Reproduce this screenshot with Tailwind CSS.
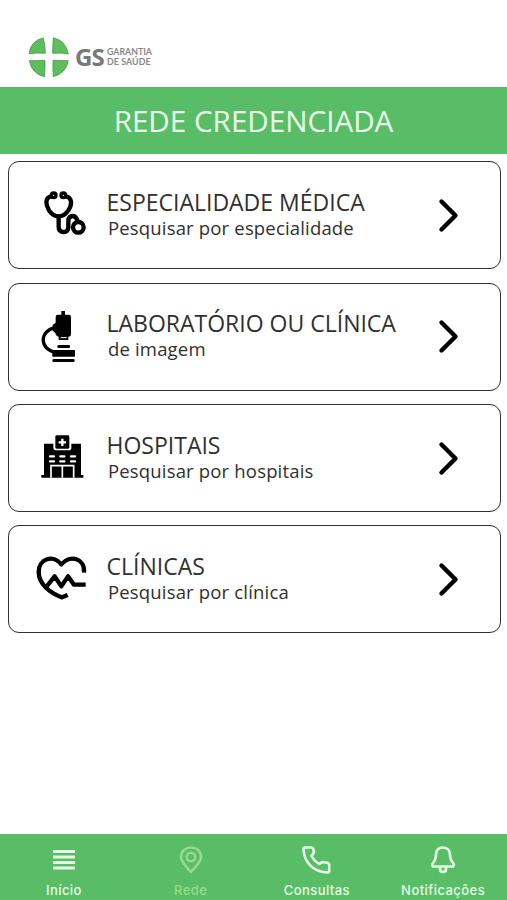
<!DOCTYPE html>
<html lang="pt-BR">
<head>
    <meta charset="UTF-8">
    <meta name="viewport" content="width=device-width, initial-scale=1.0">
    <title>Rede Credenciada</title>
    <script src="https://cdn.jsdelivr.net/npm/@tailwindcss/browser@4"></script>
</head>
<body class="h-[900px] bg-white flex flex-col overflow-hidden font-['Open_Sans',sans-serif] text-[#303030]">
    <!-- Logo -->
    <header class="h-[87px] shrink-0 flex items-start pl-7 pt-9">
        <svg class="w-[42px] h-[42px]" viewBox="0 0 126 126" fill="#5ebd5c" stroke="#348f43" stroke-width="2" stroke-linejoin="round">
            <path d="M46 6 Q52 28 52 52 Q26 50 3 53 Q8 14 46 6Z"/>
            <path d="M76 5 Q114 14 121 54 Q98 50 74 52 Q74 28 76 5Z"/>
            <path d="M4 74 Q28 74 51 73 Q52 98 49 122 Q10 112 4 74Z"/>
            <path d="M121 74 Q98 74 75 73 Q74 98 76 122 Q114 112 121 74Z"/>
        </svg>
        <div class="flex items-center h-[42px] ml-[5px] text-[#77797b]">
            <span class="text-[24px] font-bold leading-none tracking-[-0.8px] font-['Noto_Sans',sans-serif]">GS</span>
            <div class="ml-[3px] text-[8.8px] leading-[10px] font-['Lato',sans-serif] font-bold text-[#85878a]">
                <p>GARANTIA</p>
                <p class="tracking-[0.1px]">DE SAÚDE</p>
            </div>
        </div>
    </header>

    <h1 class="h-[67px] shrink-0 bg-[#59bd68] text-[#e9ffe9] text-[29.6px] leading-[68px] text-center">REDE CREDENCIADA</h1>

    <!-- Options -->
    <main class="flex-1 pl-[7.5px] pr-[6.5px] pt-[7.3px] flex flex-col gap-[13.3px]">
        <a class="h-[108px] shrink-0 flex rounded-[11px] border-[1.5px] border-[#303030]">
            <svg class="w-[70px] h-[65px] ml-[21px] mt-[18px] shrink-0" viewBox="0 0 210 195" fill="none" stroke="#000" stroke-width="13" stroke-linecap="round" stroke-linejoin="round">
                <circle cx="71" cy="46" r="7" stroke-width="10"/>
                <circle cx="100" cy="46" r="7" stroke-width="10"/>
                <path d="M63 49 C44 54 47 75 57 91 Q69 109 86 109 Q103 109 115 91 C126 75 128 54 108 49"/>
                <path d="M86 110 V141 Q86 156 101 156 Q115 156 115 141 V122 Q116 108 129 108 Q137 108 142 121"/>
                <circle cx="145" cy="142" r="16"/>
            </svg>
            <div class="ml-[7px] pt-[24px] flex-1">
                <h2 class="text-[23px] leading-8">ESPECIALIDADE MÉDICA</h2>
                <p class="ml-[1.5px] -mt-1 text-[18.5px] leading-7 tracking-[0.17px]">Pesquisar por especialidade</p>
            </div>
            <svg class="w-6 h-10 mr-[40px] mt-[33px] shrink-0" viewBox="0 0 24 40" fill="none" stroke="#000" stroke-width="4.4" stroke-linecap="round" stroke-linejoin="round"><path d="M5.500 6.500 L19.500 20.500 L5.500 34.500"/></svg>
        </a>

        <a class="h-[108px] shrink-0 flex rounded-[11px] border-[1.5px] border-[#303030]">
            <svg class="w-[70px] h-[70px] ml-[21px] mt-[16px] shrink-0" viewBox="0 0 210 210" fill="#000">
                <path d="M94 33 H105 V44 H116 Q123 44 123 51 V102 Q123 110 115 110 V120 H86 V110 Q78 109 76 99 L68 92 V75 L77 68 V51 Q77 44 84 44 H94Z"/>
                <path d="M76 82 C27 93 28 148 76 157" fill="none" stroke="#000" stroke-width="10"/>
                <path d="M92 113 H110" stroke="#fff" stroke-width="3"/>
                <rect x="82" y="135" width="38" height="9" rx="4"/>
                <rect x="67" y="150" width="68" height="20" rx="2"/>
                <rect x="67" y="177" width="67" height="9" rx="4"/>
            </svg>
            <div class="ml-[7px] pt-[23.5px] flex-1">
                <h2 class="text-[23px] leading-8">LABORATÓRIO OU CLÍNICA</h2>
                <p class="ml-[1.5px] -mt-1 text-[18.5px] leading-7 tracking-[0.17px]">de imagem</p>
            </div>
            <svg class="w-6 h-10 mr-[40px] mt-[32px] shrink-0" viewBox="0 0 24 40" fill="none" stroke="#000" stroke-width="4.4" stroke-linecap="round" stroke-linejoin="round"><path d="M5.500 6.500 L19.500 20.500 L5.500 34.500"/></svg>
        </a>

        <a class="h-[108px] shrink-0 flex rounded-[11px] border-[1.5px] border-[#303030]">
            <svg class="w-[70px] h-[65px] ml-[21px] mt-[20px] shrink-0" viewBox="0 0 210 195" fill="#000">
                <path d="M34 150 H42 V56 H70 V68 Q70 76 80 76 H116 Q124 76 124 68 V56 H153 V150 H160 V158 H34Z"/>
                <rect x="76" y="31" width="42" height="40" rx="4"/>
                <path d="M97 41 V63 M86 52 H108" stroke="#fff" stroke-width="7"/>
                <path d="M60 94 H72 M91 94 H103 M123 94 H135 M60 109 H72 M91 109 H103 M123 109 H135" stroke="#fff" stroke-width="7" stroke-linecap="round"/>
                <path d="M63 158 V122 H131 V158 M97 122 V158" fill="none" stroke="#fff" stroke-width="5"/>
            </svg>
            <div class="ml-[7px] pt-[24px] flex-1">
                <h2 class="text-[23px] leading-8">HOSPITAIS</h2>
                <p class="ml-[1.5px] -mt-1 text-[18.5px] leading-7 tracking-[0.17px]">Pesquisar por hospitais</p>
            </div>
            <svg class="w-6 h-10 mr-[40px] mt-[33px] shrink-0" viewBox="0 0 24 40" fill="none" stroke="#000" stroke-width="4.4" stroke-linecap="round" stroke-linejoin="round"><path d="M5.500 6.500 L19.500 20.500 L5.500 34.500"/></svg>
        </a>

        <a class="h-[108px] shrink-0 flex rounded-[11px] border-[1.5px] border-[#303030]">
            <svg class="w-[75px] h-[65px] ml-[16px] mt-[18px] shrink-0" viewBox="0 0 225 195" fill="none" stroke="#000" stroke-width="13" stroke-linejoin="round">
                <path d="M177 86 C181 42 135 31 109 61 C85 31 41 43 41 84 C41 119 75 148 111 160 L128 153"/>
                <path d="M66 126 L89 97 L109 127 L129 97 L147 122 H182"/>
            </svg>
            <div class="ml-[7px] pt-[24px] flex-1">
                <h2 class="text-[23px] leading-8">CLÍNICAS</h2>
                <p class="ml-[1.5px] -mt-1 text-[18.5px] leading-7 tracking-[0.17px]">Pesquisar por clínica</p>
            </div>
            <svg class="w-6 h-10 mr-[40px] mt-[33px] shrink-0" viewBox="0 0 24 40" fill="none" stroke="#000" stroke-width="4.4" stroke-linecap="round" stroke-linejoin="round"><path d="M5.500 6.500 L19.500 20.500 L5.500 34.500"/></svg>
        </a>
    </main>

    <!-- Tab bar -->
    <nav class="h-[66px] shrink-0 grid grid-cols-4 bg-[#59bd68] text-[#e4ffe2] font-['Inter',sans-serif] text-[13px] font-medium tracking-[0.45px]">
        <a class="flex flex-col items-center pt-[11px]">
            <svg class="w-[30px] h-[30px] ml-[2px]" viewBox="0 0 30 30" stroke="currentColor" stroke-width="3"><path d="M4 6.500 H26 M4 12 H26 M4 17.500 H26 M4 23 H26"/></svg>
            <span class="mt-[5px] ml-px leading-5">Início</span>
        </a>
        <a class="flex flex-col items-center pt-[11px] text-[#98d98a]">
            <svg class="w-[30px] h-[30px] ml-[2px]" viewBox="0 0 30 30" fill="none" stroke="currentColor" stroke-width="2.600" stroke-linejoin="round"><path d="M15 27 C10 21 5 17 5 12 C5 6 9.500 2.500 15 2.500 S25 6 25 12 C25 17 20 21 15 27Z"/><circle cx="15" cy="12" r="4.300"/></svg>
            <span class="mt-[5px] ml-px leading-5">Rede</span>
        </a>
        <a class="flex flex-col items-center pt-[11px]">
            <svg class="w-[30px] h-[30px] -ml-[2px]" viewBox="0 0 30 30" fill="none" stroke="currentColor" stroke-width="2.600" stroke-linejoin="round"><path d="M4 2.500 H10.500 Q12 2.500 12.300 4 L13 7.500 L10.500 11 Q13 16 18 19 L21.500 17 L27 18 Q28.200 18.300 28.200 20 V26 Q28 27.500 26 27.500 C12 27 3 17 2.500 4 Q2.500 2.500 4 2.500Z"/></svg>
            <span class="mt-[5px] leading-5">Consultas</span>
        </a>
        <a class="flex flex-col items-center pt-[11px]">
            <svg class="w-[30px] h-[30px] -ml-[2px]" viewBox="0 0 30 30" fill="none" stroke="currentColor" stroke-width="2.600" stroke-linejoin="round"><path d="M15 2.500 C10 2.500 8 6 8 10 Q8 14.500 5 18 Q3.500 20 5 21.500 H25 Q26.500 20 25 18 Q22 14.500 22 10 C22 6 20 2.500 15 2.500Z"/><path d="M12 22 V24 Q12 27 15 27 T18 24 V22"/></svg>
            <span class="mt-[5px] -ml-[1px] leading-5">Notificações</span>
        </a>
    </nav>
</body>
</html>
